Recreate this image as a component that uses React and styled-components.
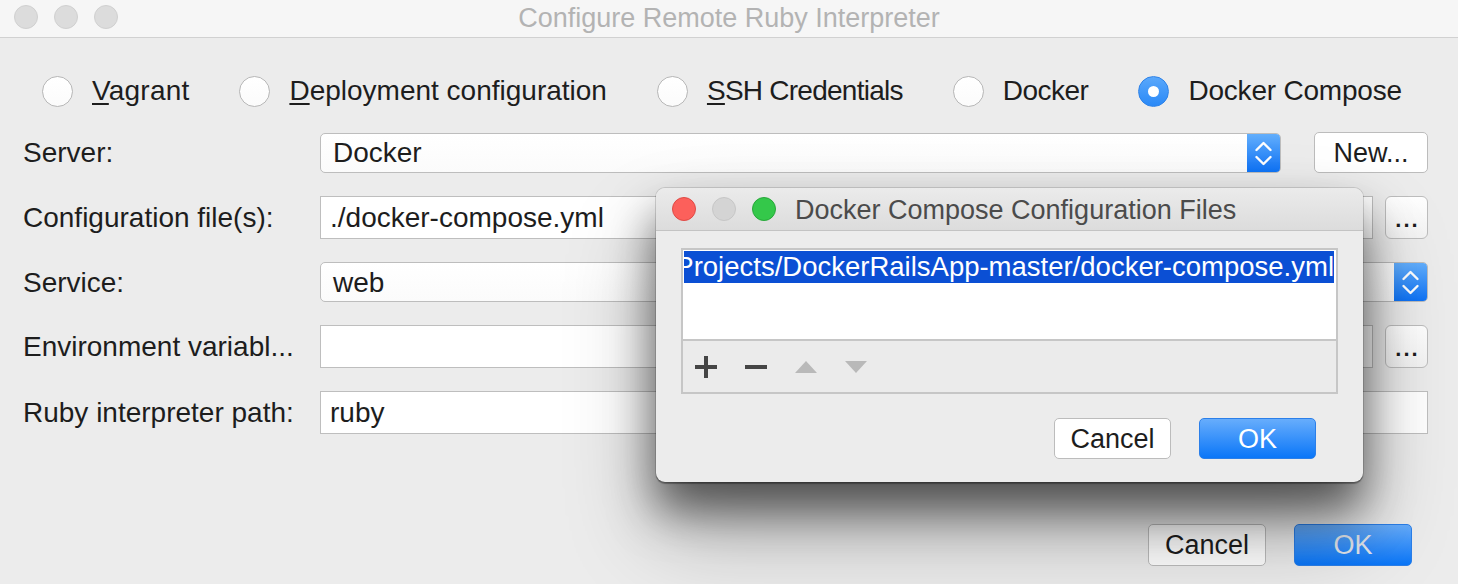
import React from 'react';
import styled, { createGlobalStyle, css } from 'styled-components';

const Global = createGlobalStyle`
  html, body { margin: 0; padding: 0; }
  body {
    width: 1458px; height: 584px; overflow: hidden;
    background: #ececec;
    font-family: "Liberation Sans", Arial, sans-serif;
    -webkit-font-smoothing: antialiased;
  }
`;

const Window = styled.div`
  position: relative;
  width: 1458px;
  height: 584px;
  background: #ececec;
  display: flex;
  flex-direction: column;
  overflow: hidden;
  color: #1d1d1d;
  font-size: 28px;
`;

const TitleBar = styled.div`
  flex: none;
  height: 37px;
  background: #f6f6f6;
  border-bottom: 1px solid #d1d1d1;
  display: grid;
  grid-template-columns: 1fr auto 1fr;
  align-items: center;
  padding: 0 14px;
`;

const Lights = styled.div`
  display: flex;
  align-items: center;
  gap: ${p => p.$gap}px;
  margin-top: ${p => p.$offset || 0}px;
`;

const Light = styled.span`
  width: 24px;
  height: 24px;
  border-radius: 50%;
  box-sizing: border-box;
  flex: none;
  ${p => p.$kind === 'red' && css`background: #fc605b; border: 1px solid #de4a45;`}
  ${p => p.$kind === 'green' && css`background: #34c84a; border: 1px solid #28a73a;`}
  ${p => p.$kind === 'off' && css`background: #d4d4d4; border: 1px solid #c6c6c6;`}
  ${p => p.$kind === 'idle' && css`background: #dcdcdc; border: 1px solid #d0d0d0;`}
`;

const WindowTitle = styled.div`
  font-size: 27px;
  color: #b3b3b3;
  white-space: nowrap;
`;

const Body = styled.div`
  flex: 1;
  display: flex;
  flex-direction: column;
  padding: 0 30px 18px 23px;
`;

const RadioRow = styled.div`
  display: flex;
  align-items: center;
  gap: 50px;
  height: 32px;
  margin: 37px 0 0 19px;
`;

const RadioItem = styled.label`
  display: flex;
  align-items: center;
  gap: 19px;
  white-space: nowrap;
`;

const RadioText = styled.span`
  letter-spacing: ${p => p.$spacing || 0}px;
`;

const RadioDot = styled.span`
  width: 31px;
  height: 31px;
  border-radius: 50%;
  box-sizing: border-box;
  display: flex;
  align-items: center;
  justify-content: center;
  ${p => p.$on
    ? css`
        background: linear-gradient(#5aa8fb, #2a89f7);
        border: 1px solid #2f83e8;
        &::after { content: ''; width: 11px; height: 11px; border-radius: 50%; background: #fff; }
      `
    : css`
        background: linear-gradient(#ffffff, #fbfbfb);
        border: 1px solid #b7b7b7;
      `}
`;

const Mnemonic = styled.span`
  text-decoration: underline;
  text-decoration-thickness: 2px;
  text-underline-offset: 3px;
`;

const Form = styled.div`
  display: grid;
  grid-template-columns: 297px 1fr;
  row-gap: 23px;
  margin-top: 25px;
  align-items: center;
`;

const Label = styled.div`
  white-space: nowrap;
  color: #1d1d1d;
  padding-top: 1px;
`;

const FieldCell = styled.div`
  display: flex;
  align-items: center;
  gap: ${p => p.$gap || 0}px;
`;

const Combo = styled.div`
  flex: 1;
  height: 40px;
  box-sizing: border-box;
  border: 1px solid #bdbdbd;
  border-radius: 5px;
  background: linear-gradient(#ffffff, #fbfbfb);
  display: flex;
  align-items: center;
  overflow: hidden;
`;

const ComboText = styled.span`
  flex: 1;
  padding: 1px 0 0 12px;
`;

const ComboArrow = styled.div`
  width: 33px;
  align-self: stretch;
  background: linear-gradient(#62aefc, #0f73f6);
  display: flex;
  align-items: center;
  justify-content: center;
`;

const TextField = styled.div`
  flex: 1;
  height: 43px;
  box-sizing: border-box;
  border: 1px solid #bebebe;
  background: #fff;
  display: flex;
  align-items: center;
  padding: 1px 0 0 9px;
`;

const SmallButton = styled.div`
  width: 43px;
  height: 43px;
  box-sizing: border-box;
  border: 1px solid #bdbdbd;
  border-radius: 6px;
  background: linear-gradient(#ffffff, #f3f3f3);
  display: flex;
  align-items: center;
  justify-content: center;
  font-weight: bold;
  font-size: 22px;
  letter-spacing: 2px;
  padding: 4px 0 0 2px;
`;

const PushButton = styled.div`
  width: ${p => p.$w}px;
  height: ${p => p.$h}px;
  box-sizing: border-box;
  border-radius: 5px;
  display: flex;
  align-items: center;
  justify-content: center;
  font-size: 27px;
  padding-top: 1px;
  ${p => p.$primary
    ? css`
        background: linear-gradient(#67adfc, #0a76f8);
        border: 1px solid #2b7fe9;
        color: ${p.$dim ? '#e4e8ee' : '#ffffff'};
      `
    : css`
        background: #ffffff;
        border: 1px solid #bcbcbc;
        color: #1d1d1d;
      `}
`;

const Footer = styled.div`
  margin-top: auto;
  display: flex;
  justify-content: flex-end;
  gap: ${p => p.$gap}px;
  padding-right: ${p => p.$right}px;
`;

const Sheet = styled.div`
  position: absolute;
  left: 656px;
  top: 188px;
  width: 707px;
  height: 294px;
  border-radius: 9px;
  background: #ececec;
  box-shadow:
    0 0 0 1px rgba(0, 0, 0, 0.12),
    0 2px 1px rgba(0, 0, 0, 0.3),
    0 28px 45px rgba(0, 0, 0, 0.55),
    0 50px 90px rgba(0, 0, 0, 0.28);
  display: flex;
  flex-direction: column;
  overflow: hidden;
  z-index: 2;
`;

const SheetTitleBar = styled.div`
  flex: none;
  height: 43px;
  box-sizing: border-box;
  background: linear-gradient(#ebebeb, #dcdcdc);
  border-bottom: 1px solid #c3c3c3;
  display: flex;
  align-items: center;
  padding-left: 16px;
`;

const SheetTitle = styled.div`
  margin-left: 19px;
  color: #4b4b4b;
  font-size: 27px;
  white-space: nowrap;
  padding-top: 2px;
`;

const SheetBody = styled.div`
  flex: 1;
  display: flex;
  flex-direction: column;
  padding: 17px 25px 23px 25px;
`;

const List = styled.div`
  height: 146px;
  box-sizing: border-box;
  border: 2px solid #c6c6c6;
  display: flex;
  flex-direction: column;
`;

const ListArea = styled.div`
  flex: 1;
  background: #fff;
  padding: 1px 2px 0 1px;
  overflow: hidden;
`;

const ListRow = styled.div`
  height: 32px;
  font-size: 27.5px;
  background: ${p => (p.$selected ? '#0b4fd4' : 'transparent')};
  color: ${p => (p.$selected ? '#fff' : '#1d1d1d')};
  display: flex;
  align-items: center;
  justify-content: flex-end;
  overflow: hidden;
  white-space: nowrap;
`;

const Toolbar = styled.div`
  height: 51px;
  flex: none;
  border-top: 2px solid #c6c6c6;
  background: #ebebeb;
  display: flex;
  align-items: center;
  gap: 28px;
  padding-left: 12px;
`;

const ToolIcon = styled.svg`
  width: 22px;
  height: 22px;
  flex: none;
`;

const Chevrons = () => (
  <svg width="33" height="38" viewBox="0 0 33 38">
    <path d="M9.5 16 L16.5 9 L23.5 16" fill="none" stroke="#fff" strokeWidth="2.4" strokeLinecap="round" strokeLinejoin="round" />
    <path d="M9.5 23 L16.5 30 L23.5 23" fill="none" stroke="#fff" strokeWidth="2.4" strokeLinecap="round" strokeLinejoin="round" />
  </svg>
);

export default function App() {
  return (
    <>
      <Global />
      <Window>
        <TitleBar>
          <Lights $gap={16} $offset={-4}>
            <Light $kind="idle" />
            <Light $kind="idle" />
            <Light $kind="idle" />
          </Lights>
          <WindowTitle>Configure Remote Ruby Interpreter</WindowTitle>
          <div />
        </TitleBar>
        <Body>
          <RadioRow>
            <RadioItem><RadioDot /><RadioText $spacing={0.2}><Mnemonic>V</Mnemonic>agrant</RadioText></RadioItem>
            <RadioItem><RadioDot /><RadioText><Mnemonic>D</Mnemonic>eployment configuration</RadioText></RadioItem>
            <RadioItem><RadioDot /><RadioText $spacing={-0.75}><Mnemonic>S</Mnemonic>SH Credentials</RadioText></RadioItem>
            <RadioItem><RadioDot /><RadioText $spacing={-0.5}>Docker</RadioText></RadioItem>
            <RadioItem><RadioDot $on /><RadioText $spacing={-0.2}>Docker Compose</RadioText></RadioItem>
          </RadioRow>
          <Form>
            <Label>Server:</Label>
            <FieldCell $gap={33}>
              <Combo>
                <ComboText>Docker</ComboText>
                <ComboArrow><Chevrons /></ComboArrow>
              </Combo>
              <PushButton $w={114} $h={41}>New...</PushButton>
            </FieldCell>

            <Label>Configuration file(s):</Label>
            <FieldCell $gap={12}>
              <TextField>./docker-compose.yml</TextField>
              <SmallButton>...</SmallButton>
            </FieldCell>

            <Label>Service:</Label>
            <FieldCell>
              <Combo>
                <ComboText>web</ComboText>
                <ComboArrow><Chevrons /></ComboArrow>
              </Combo>
            </FieldCell>

            <Label>Environment variabl...</Label>
            <FieldCell $gap={12}>
              <TextField />
              <SmallButton>...</SmallButton>
            </FieldCell>

            <Label>Ruby interpreter path:</Label>
            <FieldCell>
              <TextField>ruby</TextField>
            </FieldCell>
          </Form>
          <Footer $gap={28} $right={16}>
            <PushButton $w={118} $h={42}>Cancel</PushButton>
            <PushButton $w={118} $h={42} $primary $dim>OK</PushButton>
          </Footer>
        </Body>

        <Sheet>
          <SheetTitleBar>
            <Lights $gap={16}>
              <Light $kind="red" />
              <Light $kind="off" />
              <Light $kind="green" />
            </Lights>
            <SheetTitle>Docker Compose Configuration Files</SheetTitle>
          </SheetTitleBar>
          <SheetBody>
            <List>
              <ListArea>
                <ListRow $selected>Projects/DockerRailsApp-master/docker-compose.yml</ListRow>
              </ListArea>
              <Toolbar>
                <ToolIcon viewBox="0 0 22 22">
                  <rect x="9" y="0" width="4" height="22" fill="#454545" />
                  <rect x="0" y="9" width="22" height="4" fill="#454545" />
                </ToolIcon>
                <ToolIcon viewBox="0 0 22 22">
                  <rect x="0" y="9" width="22" height="4" fill="#454545" />
                </ToolIcon>
                <ToolIcon viewBox="0 0 22 22">
                  <path d="M0 17 L11 5 L22 17 Z" fill="#b9b9b9" />
                </ToolIcon>
                <ToolIcon viewBox="0 0 22 22">
                  <path d="M0 5 L22 5 L11 17 Z" fill="#b9b9b9" />
                </ToolIcon>
              </Toolbar>
            </List>
            <Footer $gap={28} $right={22}>
              <PushButton $w={117} $h={41}>Cancel</PushButton>
              <PushButton $w={117} $h={41} $primary>OK</PushButton>
            </Footer>
          </SheetBody>
        </Sheet>
      </Window>
    </>
  );
}
